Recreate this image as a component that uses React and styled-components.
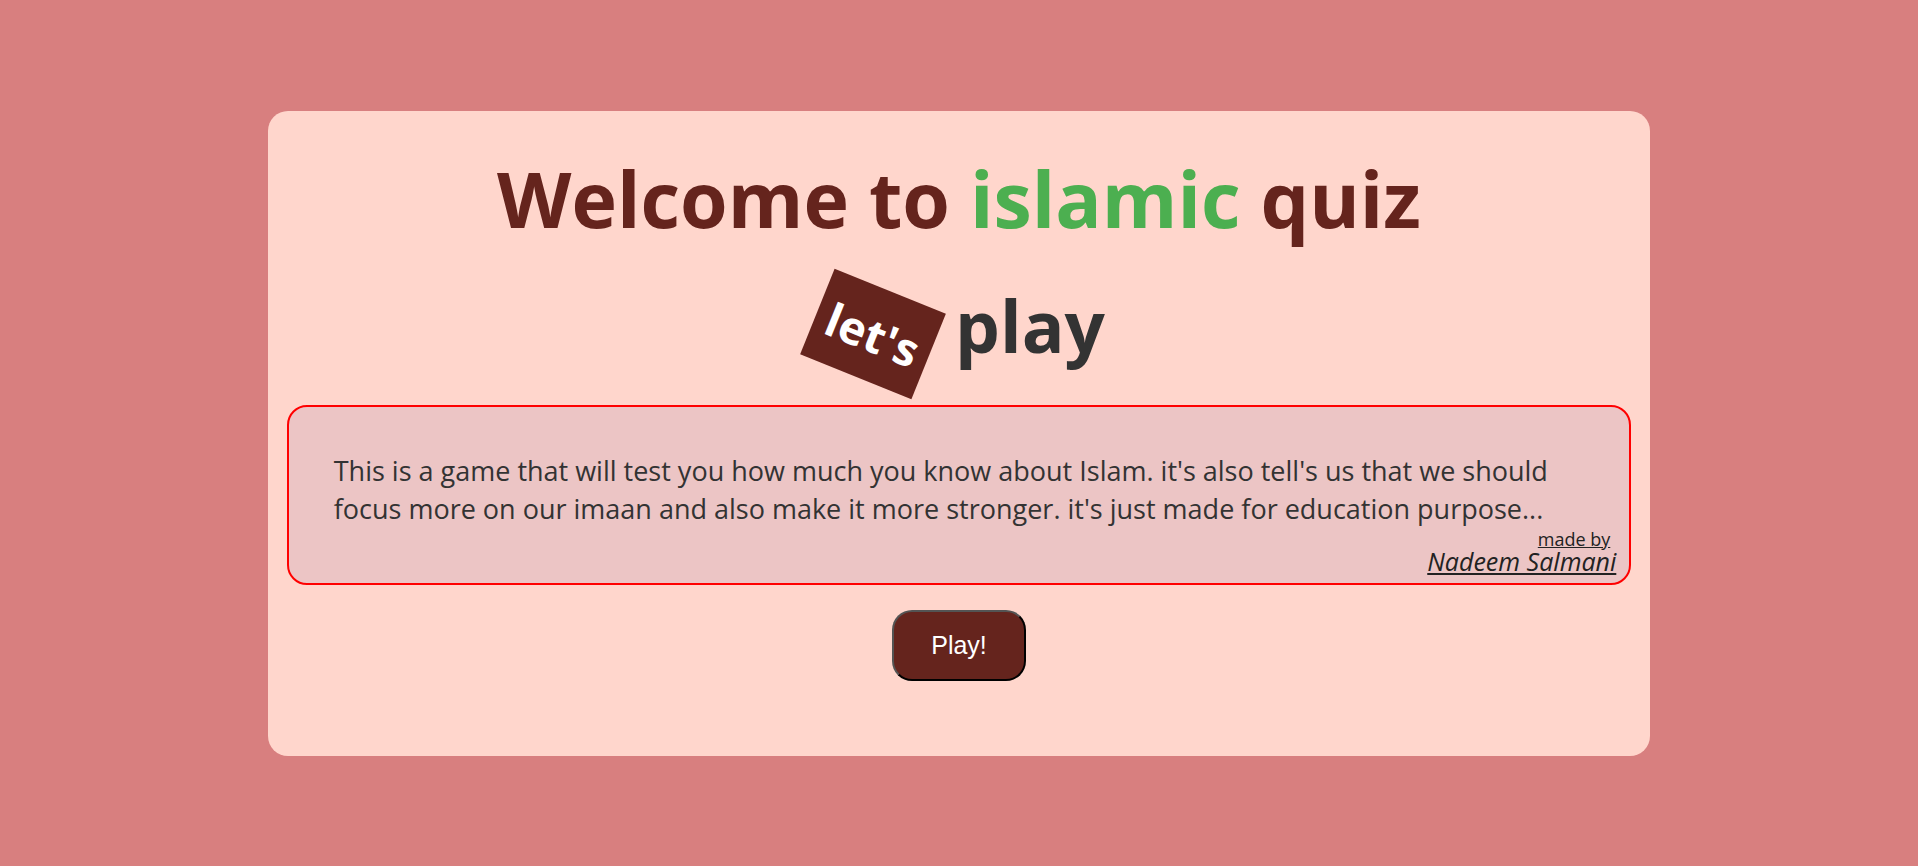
import React from "react";
import styled, { createGlobalStyle } from "styled-components";

const GlobalStyle = createGlobalStyle`
  * { box-sizing: border-box; }
  body {
    margin: 0;
    background: #d87f7f;
    color: #333333;
    font-family: "Open Sans", "Noto Sans", sans-serif;
  }
`;

const Page = styled.main`
  min-height: 100vh;
  display: flex;
  align-items: center;
  justify-content: center;
`;

const Card = styled.section`
  width: calc(70% + 40px);
  padding: 34px 19px 75px;
  display: flex;
  flex-direction: column;
  align-items: center;
  background: #ffd6cc;
  border-radius: 20px;
`;

const Title = styled.h1`
  margin: 0;
  color: #65241d;
  font-size: 77px;
  font-weight: 700;
  line-height: 108px;
  text-align: center;
`;

const Highlight = styled.span`
  color: #4caf50;
`;

const Subtitle = styled.h2`
  margin: 19px 0 25px;
  display: flex;
  align-items: center;
  gap: 22px;
  font-size: 71px;
  font-weight: 700;
  line-height: 102px;
`;

const Tag = styled.span`
  width: 120px;
  margin-top: 16px;
  background: #65241d;
  color: #ffffff;
  font-size: 46px;
  line-height: 92px;
  text-align: center;
  transform: rotate(22deg);
`;

const Info = styled.div`
  align-self: stretch;
  padding: 45px 13px 11px;
  display: flex;
  flex-direction: column;
  background: #ecc5c5;
  border: 2px solid #ff0000;
  border-radius: 20px;
`;

const Description = styled.p`
  margin: 0;
  padding: 0 32px;
  font-size: 27px;
  line-height: 38px;
`;

const Credit = styled.div`
  display: flex;
  flex-direction: column;
  align-items: flex-end;
  color: #222222;
  line-height: 22px;
  text-decoration: underline;
`;

const CreditLabel = styled.span`
  padding-right: 6px;
  font-size: 18px;
`;

const Author = styled.em`
  font-size: 25px;
`;

const PlayButton = styled.button`
  margin-top: 25px;
  padding: 19px 37px;
  background: #65241d;
  color: #ffffff;
  border: 2px outset #000000;
  border-radius: 20px;
  font-family: "Liberation Sans", Arial, sans-serif;
  font-size: 25px;
  line-height: 29px;
  cursor: pointer;
`;

export default function App() {
  return (
    <>
      <GlobalStyle />
      <Page>
        <Card>
          <Title>
            Welcome to <Highlight>islamic</Highlight> quiz
          </Title>
          <Subtitle>
            <Tag>let's</Tag>
            <span>play</span>
          </Subtitle>
          <Info>
            <Description>
              This is a game that will test you how much you know about Islam.
              it's also tell's us that we should focus more on our imaan and
              also make it more stronger. it's just made for education
              purpose...
            </Description>
            <Credit>
              <CreditLabel>made by</CreditLabel>
              <Author>Nadeem Salmani</Author>
            </Credit>
          </Info>
          <PlayButton type="button">Play!</PlayButton>
        </Card>
      </Page>
    </>
  );
}
